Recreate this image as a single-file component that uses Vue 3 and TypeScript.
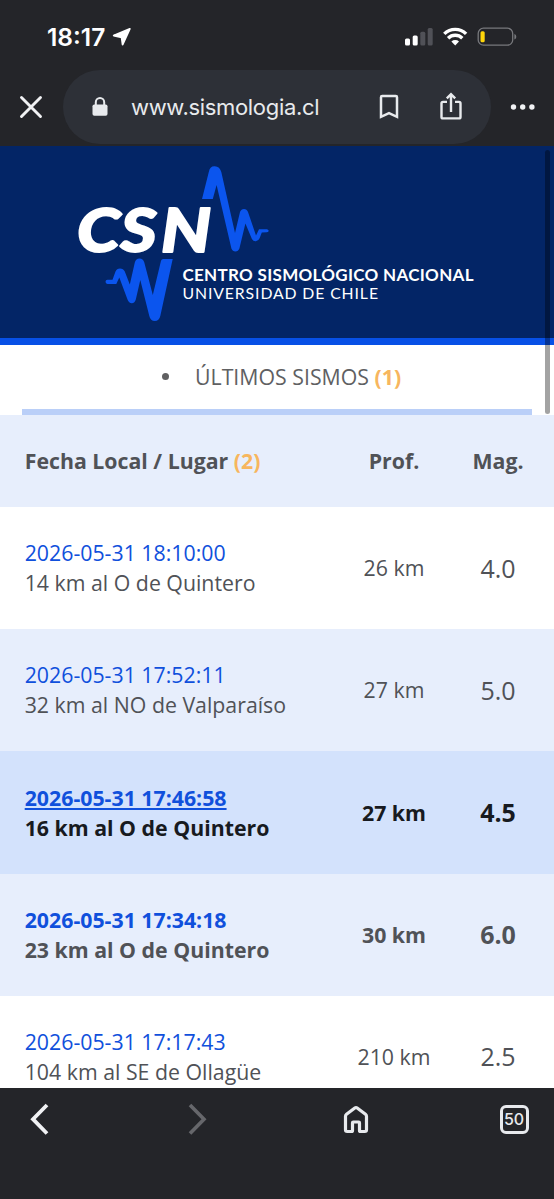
<script setup lang="ts">
interface Quake {
  date: string
  place: string
  depth: string
  magnitude: string
  tone?: string
}

const quakes: Quake[] = [
  { date: '2026-05-31 18:10:00', place: '14 km al O de Quintero', depth: '26 km', magnitude: '4.0' },
  { date: '2026-05-31 17:52:11', place: '32 km al NO de Valparaíso', depth: '27 km', magnitude: '5.0', tone: 'tinted' },
  { date: '2026-05-31 17:46:58', place: '16 km al O de Quintero', depth: '27 km', magnitude: '4.5', tone: 'strong active' },
  { date: '2026-05-31 17:34:18', place: '23 km al O de Quintero', depth: '30 km', magnitude: '6.0', tone: 'strong tinted' },
  { date: '2026-05-31 17:17:43', place: '104 km al SE de Ollagüe', depth: '210 km', magnitude: '2.5' },
]
</script>

<template>
  <div class="phone">
    <header class="chrome">
      <div class="status">
        <span class="time">18:17</span>
        <svg class="arrow" width="20" height="20" viewBox="0 0 20 20">
          <path d="M17.800 1.800 1.700 8.500 9.600 10.400 10.600 17.600Z" fill="#fff" stroke="#fff" stroke-width="1.800" stroke-linejoin="round" />
        </svg>
        <span class="spacer"></span>
        <svg width="112" height="20" viewBox="0 0 112 20">
          <rect x="0" y="11.500" width="5" height="7" rx="1.500" fill="#fff" />
          <rect x="7.700" y="8.500" width="5" height="10" rx="1.500" fill="#fff" />
          <rect x="15.300" y="4.800" width="5" height="13.700" rx="1.500" fill="#505157" />
          <rect x="22.700" y="1" width="5" height="17.500" rx="1.500" fill="#505157" />
          <g fill="none" stroke="#fff" stroke-width="3.400">
            <path d="M39.300 6.900a15.500 15.500 0 0 1 21.800 0" />
            <path d="M43.100 11.200a10.200 10.200 0 0 1 14.200 0" />
          </g>
          <path d="M46.400 14.500a5.600 5.600 0 0 1 7.600 0l-3.800 4Z" fill="#fff" />
          <rect x="73.200" y="1.200" width="34.500" height="17" rx="5.300" fill="none" stroke="#77787c" stroke-width="1.300" />
          <rect x="75.500" y="4.200" width="4.200" height="11" rx="1.500" fill="#ffd60a" />
          <path d="M109.400 7c2.500.8 2.500 4.700 0 5.500Z" fill="#77787c" />
        </svg>
      </div>
      <div class="address">
        <svg class="close" width="24" height="24" viewBox="0 0 24 24">
          <path d="m2.500 2.500 19 19m0-19-19 19" stroke="#f1f2f4" stroke-width="2.900" stroke-linecap="round" />
        </svg>
        <div class="pill">
          <svg class="lock" width="16" height="20" viewBox="0 0 16 20">
            <path d="M3.800 8V5.300a4.200 4.200 0 0 1 8.400 0V8" fill="none" stroke="#e8eaed" stroke-width="2" />
            <rect x="0.500" y="7.500" width="15" height="11.300" rx="1.800" fill="#e8eaed" />
          </svg>
          <span class="url">www.sismologia.cl</span>
          <svg class="bookmark" width="20" height="26" viewBox="0 0 20 26">
            <path d="M2 3.200q0-1.200 1.200-1.200h13.600q1.200 0 1.200 1.200V22.800l-8-3.600-8 3.600Z" fill="none" stroke="#e8eaed" stroke-width="2.500" />
          </svg>
          <svg class="share" width="24" height="30" viewBox="0 0 24 30">
            <path d="M8 10.500H4q-1.500 0-1.500 1.500v13.500q0 1.500 1.500 1.500h16q1.500 0 1.500-1.500V12q0-1.500-1.500-1.500h-4M12 20.500V3M7.800 7 12 2.800 16.200 7" transform="translate(0 -.6)" fill="none" stroke="#e8eaed" stroke-width="2.400" />
          </svg>
        </div>
        <svg class="dots" width="26" height="8" viewBox="0 0 26 8" fill="#f1f2f4">
          <circle cx="3.500" cy="4" r="2.700" /><circle cx="12.700" cy="4" r="2.700" /><circle cx="21.900" cy="4" r="2.700" />
        </svg>
      </div>
    </header>

    <main class="page">
      <div class="brand">
        <svg width="554" height="192" viewBox="0 146 554 192">
          <g fill="#0b55ee">
            <path d="M202.500 200h10.800l3.800-14 14.800 63.500q1.200 3 4 3t4-3l6-25 6.500 15.500q1.500 2.500 4 2.200t3.700-3l2.200-5.700 5.200-.2q1.700-.5 1.700-1.500t-1.700-1.500h-8l-3 6.200-8-23.500q-1.200-3-4-3t-4 3l-5 21-13.700-61q-1.500-5.500-6.500-5.800t-6 5.800Z" transform="translate(-.5 -1)" />
            <path d="M172.700 259h-9.500q-1.700 0-2.200 1.800l-8.200 34.200-8.500-32.500q-1.200-4-4.800-4t-4.700 4l-5 22-5-13q-1.500-3-4.800-3t-4.500 3l-3 8.300h-5q-2 .2-2 2t2 2.300h8.800l3-6.500 8.200 22q1.300 3.600 4.300 3.600t4-3.600l4.500-19.500 9 36q1.200 5 5.500 5t5.500-5Z" />
          </g>
          <g fill="#fff">
            <text class="wordmark" transform="translate(77 251.800) scale(1.140 1)" x="0 38.200 73.600" y="0">CSN</text>
            <text class="center" x="182.500" y="281.300" textLength="291" lengthAdjust="spacing">CENTRO SISMOLÓGICO NACIONAL</text>
            <text class="university" x="182.500" y="299.200" textLength="195.500" lengthAdjust="spacing">UNIVERSIDAD DE CHILE</text>
          </g>
        </svg>
      </div>

      <div class="tab">
        <i class="bullet"></i>
        <span>ÚLTIMOS SISMOS <b class="note">(1)</b></span>
      </div>

      <table>
        <thead>
          <tr><th class="where">Fecha Local / Lugar <span class="note">(2)</span></th><th class="depth">Prof.</th><th class="mag">Mag.</th></tr>
        </thead>
        <tbody>
          <tr v-for="quake in quakes" :key="quake.date" :class="quake.tone">
            <td class="where"><a>{{ quake.date }}</a><br>{{ quake.place }}</td>
            <td class="depth">{{ quake.depth }}</td>
            <td class="mag">{{ quake.magnitude }}</td>
          </tr>
        </tbody>
      </table>
      <div class="scrollbar"></div>
    </main>

    <nav class="bottom">
      <svg class="back" width="24" height="34" viewBox="0 0 24 34"><path d="M20 3 6 17.200 20 31.500" fill="none" stroke="#f1f2f4" stroke-width="3.800" /></svg>
      <svg class="forward" width="24" height="34" viewBox="0 0 24 34"><path d="m4 3 14 14.200L4 31.500" fill="none" stroke="#66676b" stroke-width="3.600" /></svg>
      <svg class="home" width="28" height="30" viewBox="0 0 28 30">
        <path d="M3.500 11.500q0-1.200 1-2l8.300-6.300q1.200-.9 2.400 0l8.300 6.300q1 .8 1 2V25q0 1.700-1.700 1.700h-4.300q-1 0-1-1V18q0-.8-.8-.8h-5.400q-.8 0-.8.800v7.700q0 1-1 1H5.200q-1.700 0-1.700-1.700Z" transform="translate(0 .8)" fill="none" stroke="#e8eaed" stroke-width="3.200" stroke-linejoin="round" />
      </svg>
      <span class="tabs">50</span>
    </nav>
  </div>
</template>

<style>
html, body { margin: 0; overflow: hidden; }
</style>

<style scoped>
.phone {
  width: 554px;
  height: 1199px;
  display: flex;
  flex-direction: column;
  overflow: hidden;
  background: #242529;
  font-family: "Open Sans", sans-serif;
}
.phone * { box-sizing: border-box; }
svg { display: block; flex: none; }
.chrome { height: 146px; flex: none; background: #242529; }
.status { height: 69px; display: flex; align-items: flex-start; padding: 27px 33px 0 47px; }
.time { font: 600 24.500px/20px Inter, sans-serif; color: #fff; width: 60px; letter-spacing: 0; white-space: nowrap; }
.arrow { margin-left: 5px; }
.spacer { flex: 1; }
.status > svg:last-child { margin-right: 4px; }
.address { display: flex; align-items: center; height: 75px; }
.close { margin-left: 19px; }
.pill {
  margin-left: 20px;
  width: 428px;
  height: 74px;
  border-radius: 37px;
  background: #2d3037;
  display: flex;
  align-items: center;
}
.lock { margin-left: 29px; }
.url { margin-left: 23px; width: 189px; font: 400 22px/30px Inter, sans-serif; letter-spacing: -0.320px; color: #e8eaed; white-space: nowrap; }
.bookmark { margin-left: 59px; }
.share { margin-left: 40px; }
.dots { margin-left: 19px; }
.page { position: relative; height: 942px; flex: none; overflow: hidden; background: #fff; }
.brand { height: 199px; background: #032566; border-bottom: 7px solid #0750e6; }
.wordmark { font: italic 900 61px Lato, sans-serif; stroke: #fff; stroke-width: 1.800px; stroke-linejoin: round; }
.center { font: 700 17px Lato, sans-serif; }
.university { font: 400 15.800px Lato, sans-serif; }
.tab {
  margin: 0 22px;
  height: 70px;
  border-bottom: 6px solid #bacff8;
  display: flex;
  align-items: center;
  padding: 0 0 2px 139px;
  font-size: 21.300px;
  color: #606062;
  white-space: nowrap;
}
.bullet { width: 7px; height: 7px; border-radius: 50%; background: #606062; margin: 0 26px 0 1px; }
.note { color: #f7b65e; }
table { width: 554px; border-collapse: collapse; table-layout: fixed; color: #505257; font-size: 21.300px; line-height: 30px; }
tr { height: 122.200px; }
thead tr { height: 92px; background: #e7eefc; }
th, td { padding: 0; text-align: center; vertical-align: middle; white-space: nowrap; }
td { padding-top: 0.400px; }
th { font-weight: 700; }
.where { width: 345px; padding-left: 24.700px; text-align: left; }
.depth { width: 98px; }
.mag { width: 111px; padding-right: 1px; }
td.mag { font-size: 25px; padding-top: 0; padding-bottom: 1px; }
a { color: #1050dc; }
.tinted { background: #e7eefc; }
.active { background: #d3e2fc; color: #171a20; }
.strong { font-weight: 700; }
.active a { text-decoration: underline; text-decoration-thickness: 1.500px; text-underline-offset: 2px; }
.scrollbar { position: absolute; top: 4px; right: 4px; width: 5px; height: 264px; border-radius: 3px; background: rgb(0 0 0 / 36%); }
.bottom { flex: 1; display: flex; align-items: flex-start; padding-top: 14px; background: #242529; }
.back { margin-left: 27px; }
.forward { margin-left: 135px; }
.home { margin-left: 131.500px; margin-top: 2px; }
.tabs {
  margin: 3px 0 0 130px;
  width: 29px;
  height: 29px;
  border: 3px solid #e8eaed;
  border-radius: 6px;
  color: #e8eaed;
  font: 500 16px/23px Inter, sans-serif;
  text-align: center;
}
</style>
